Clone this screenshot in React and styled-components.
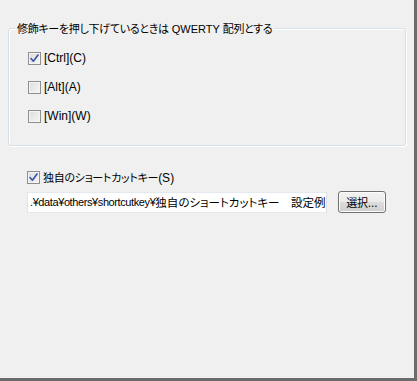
import styled, { createGlobalStyle } from "styled-components";

const GlobalStyle = createGlobalStyle`
  html, body {
    margin: 0;
    padding: 0;
    background: #f0f0f0;
  }
  body {
    font-family: "Liberation Sans", "Noto Sans CJK JP", sans-serif;
    font-size: 12px;
    color: #000;
  }
`;

const CheckIcon = () => (
  <svg width="9" height="9" viewBox="0 0 9 9">
    <path
      d="M1 4.5 L3.4 7.2 L8 1"
      fill="none"
      stroke="#3a52a8"
      strokeWidth="1.6"
      strokeLinecap="round"
      strokeLinejoin="round"
    />
  </svg>
);

const CheckBox = ({ checked, children }) => (
  <CheckRow>
    <Box>{checked ? <CheckIcon /> : null}</Box>
    <Label>{children}</Label>
  </CheckRow>
);

const App = () => {
  return (
    <>
      <GlobalStyle />
      <Window>
        <Group>
          <Legend>
            <Jp>修飾キーを押し下げているときは</Jp> QWERTY <Jp>配列とする</Jp>
          </Legend>
          <CheckList>
            <CheckBox checked>[Ctrl](C)</CheckBox>
            <CheckBox>[Alt](A)</CheckBox>
            <CheckBox>[Win](W)</CheckBox>
          </CheckList>
        </Group>

        <Section>
          <CheckBox checked>
            <Jp>独自のショートカットキー</Jp>(S)
          </CheckBox>
          <PathRow>
            <PathField>
              .¥data¥others¥shortcutkey¥<Jp $wide>独自のショートカットキー　設定例.txt</Jp>
            </PathField>
            <Button type="button">
              <Jp>選択</Jp>...
            </Button>
          </PathRow>
        </Section>
      </Window>
    </>
  );
};
export default App;

const Window = styled.div`
  width: 417px;
  height: 381px;
  box-sizing: border-box;
  background: #f0f0f0;
  border-right: 3px solid #6b6b6b;
  border-bottom: 3px solid #6b6b6b;
  padding: 28px 8px 0 8px;
  display: flex;
  flex-direction: column;
`;

const Group = styled.div`
  position: relative;
  width: 398px;
  height: 118px;
  box-sizing: border-box;
  border: 1px solid #d5dfe5;
  border-radius: 3px;
  box-shadow: inset 1px 1px 0 #fff, 1px 1px 0 #fff;
  padding: 23px 0 0 19px;
`;

const Jp = styled.span`
  font-family: "Noto Sans CJK JP", sans-serif;
  font-size: ${({ $wide }) => ($wide ? "11.5px" : "11px")};
  font-feature-settings: "palt";
  letter-spacing: ${({ $wide }) => ($wide ? "0" : "-0.3px")};
`;

const Legend = styled.div`
  position: absolute;
  top: -9px;
  left: 6px;
  padding: 0 2px;
  background: #f0f0f0;
  line-height: 16px;
  font-size: 11px;
  white-space: nowrap;
`;

const CheckList = styled.div`
  display: flex;
  flex-direction: column;
  gap: 16px;
`;

const CheckRow = styled.label`
  display: flex;
  align-items: center;
  gap: 3px;
  height: 13px;
`;

const Box = styled.span`
  width: 11px;
  height: 11px;
  border: 1px solid #8e8f8f;
  background: linear-gradient(135deg, #dcdcdc 0%, #f6f6f6 100%);
  box-shadow: inset 0 0 0 1px #f4f4f4;
  display: flex;
  align-items: center;
  justify-content: center;
  flex-shrink: 0;
`;

const Label = styled.span`
  font-size: 12px;
  line-height: 13px;
  white-space: nowrap;
`;

const Section = styled.div`
  padding: 25px 0 0 19px;
  display: flex;
  flex-direction: column;
  gap: 7px;
`;

const PathRow = styled.div`
  display: flex;
  align-items: center;
  gap: 11px;
`;

const PathField = styled.div`
  width: 300px;
  height: 21px;
  box-sizing: border-box;
  border: 1px solid #abadb3;
  border-top-color: #e3e9ef;
  border-left-color: #e2e3ea;
  border-right-color: #dbdfe6;
  border-bottom-color: #e3e9ef;
  background: #fff;
  overflow: hidden;
  white-space: nowrap;
  padding: 0 2px;
  display: flex;
  align-items: center;
  font-family: "Liberation Sans", sans-serif;
  font-size: 11px;
  letter-spacing: -0.4px;
`;

const Button = styled.button`
  width: 48px;
  height: 22px;
  box-sizing: border-box;
  border: 1px solid #707070;
  border-radius: 3px;
  background: linear-gradient(#f2f2f2 0%, #ebebeb 50%, #dddddd 51%, #cfcfcf 100%);
  box-shadow: inset 0 0 0 1px #fcfcfc;
  font-family: "Liberation Sans", sans-serif;
  font-size: 12px;
  padding: 0;
  color: #000;
`;
